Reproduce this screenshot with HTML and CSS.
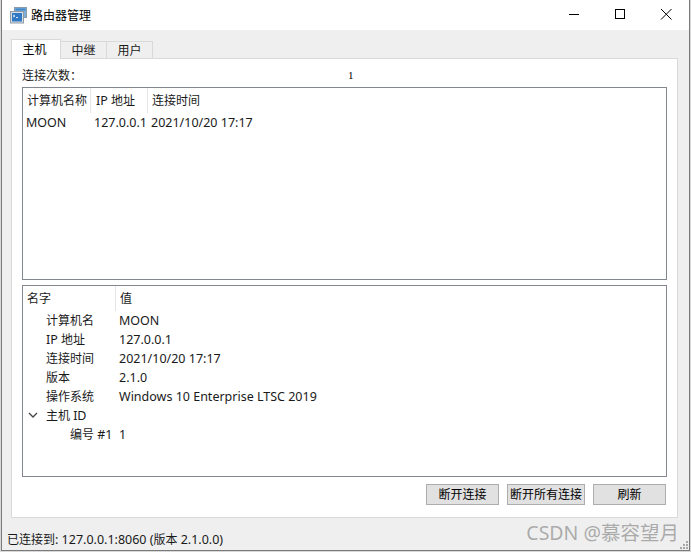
FILE: index.html
```html
<!DOCTYPE html>
<html lang="zh">
<head>
<meta charset="utf-8">
<title>路由器管理</title>
<link rel="stylesheet" href="styles.css">
</head>
<body>
<div class="window">
  <div class="titlebar">
    <svg class="app-icon" width="17" height="17" viewBox="0 0 17 17">
      <rect x="4.500" y="0.500" width="12" height="10" fill="#7fb0dc" stroke="#8b9aa8"/>
      <rect x="5.500" y="1.500" width="10" height="2" fill="#3f88cc"/>
      <rect x="0.500" y="4.500" width="13" height="11.500" fill="#d8dee4" stroke="#8f9aa6"/>
      <rect x="2" y="6" width="10" height="8.500" fill="#2f78c4"/>
      <path d="M3 8l2 1-2 1M6 10.500h2" fill="none" stroke="#fff" stroke-width="0.800"/>
    </svg>
    <span class="title-text">路由器管理</span>
    <div class="controls">
      <svg class="ctl" width="46" height="30" viewBox="0 0 46 30"><path d="M18 14.500h10" stroke="#000" fill="none"/></svg>
      <svg class="ctl" width="46" height="30" viewBox="0 0 46 30"><rect x="18.500" y="9.500" width="9" height="9" stroke="#000" fill="none"/></svg>
      <svg class="ctl" width="46" height="30" viewBox="0 0 46 30"><path d="M18 9l10.500 10.500M28.500 9L18 19.500" stroke="#000" fill="none"/></svg>
    </div>
  </div>
  <div class="body">
    <div class="tabs">
      <div class="tab active">主机</div>
      <div class="tab">中继</div>
      <div class="tab">用户</div>
    </div>
    <div class="pane">
      <div class="count-row"><span class="count-label">连接次数：</span><span class="count-value">1</span></div>
      <div class="list upper">
        <div class="row head">
          <div class="cell c1">计算机名称</div>
          <div class="cell c2"><span class="lat">IP</span> 地址</div>
          <div class="cell c3">连接时间</div>
        </div>
        <div class="row data">
          <div class="cell c1 lat">MOON</div>
          <div class="cell c2 lat">127.0.0.1</div>
          <div class="cell c3 lat">2021/10/20 17:17</div>
        </div>
      </div>
      <div class="list lower">
        <div class="row head">
          <div class="cell n1">名字</div>
          <div class="cell n2">值</div>
        </div>
        <div class="tree">
          <div class="trow"><div class="tname">计算机名</div><div class="lat">MOON</div></div>
          <div class="trow"><div class="tname"><span class="lat">IP</span> 地址</div><div class="lat">127.0.0.1</div></div>
          <div class="trow"><div class="tname">连接时间</div><div class="lat">2021/10/20 17:17</div></div>
          <div class="trow"><div class="tname">版本</div><div class="lat">2.1.0</div></div>
          <div class="trow"><div class="tname">操作系统</div><div class="lat">Windows 10 Enterprise LTSC 2019</div></div>
          <div class="trow"><div class="tname"><svg class="chev" width="10" height="6" viewBox="0 0 10 6"><path d="M1 1l4 4 4-4" fill="none" stroke="#444" stroke-width="1.300"/></svg>主机 <span class="lat">ID</span></div><div></div></div>
          <div class="trow"><div class="tname child">编号 <span class="lat">#1</span></div><div class="lat">1</div></div>
        </div>
      </div>
      <div class="buttons">
        <div class="btn b1">断开连接</div>
        <div class="btn b2">断开所有连接</div>
        <div class="btn b3">刷新</div>
      </div>
    </div>
    <div class="status">已连接到<span class="lat">: 127.0.0.1:8060 (</span>版本 <span class="lat">2.1.0.0)</span></div>
  </div>
  <div class="watermark">CSDN @慕容望月</div>
  <svg class="grip" width="10" height="8" viewBox="0 0 10 8">
    <path d="M7 0h2v2H7zM4 3h2v2H4zM7 3h2v2H7zM1 6h2v2H1zM4 6h2v2H4zM7 6h2v2H7z" fill="#a8a8a8"/>
  </svg>
</div>
</body>
</html>
```
FILE: styles.css
```css
* { box-sizing: border-box; }
html, body { margin: 0; padding: 0; }
body {
  width: 691px;
  height: 552px;
  overflow: hidden;
  background: #d8d8d8;
  font-family: "Noto Sans", "Noto Sans CJK SC", sans-serif;
  font-size: 12px;
  color: #1a1a1a;
}
.lat { font-size: 12.500px; }
.window {
  position: relative;
  width: 689px;
  height: 551px;
  margin-left: 1px;
  display: flex;
  flex-direction: column;
  background: #efefef;
  border: 1px solid #7a7a7a;
  border-top: 0;
}
.titlebar {
  height: 30px;
  flex: none;
  background: #fff;
  display: flex;
  align-items: center;
  padding-left: 8px;
}
.app-icon { flex: none; }
.title-text { margin-left: 4px; font-size: 12px; color: #000; }
.controls { margin-left: auto; display: flex; }
.ctl { display: block; }
.body {
  flex: 1;
  display: flex;
  flex-direction: column;
  padding: 9px 11px 0 9px;
}
.tabs { display: flex; height: 19px; flex: none; align-items: flex-end; position: relative; z-index: 1; }
.tab {
  width: 46px;
  height: 17px;
  background: #efefef;
  border: 1px solid #d9d9d9;
  border-left: 0;
  border-bottom: 0;
  text-align: center;
  line-height: 17px;
}
.tab.active {
  width: 50px;
  height: 20px;
  background: #fff;
  border-left: 1px solid #d9d9d9;
  margin-bottom: -1px;
  padding-right: 3px;
  line-height: 20px;
  color: #000;
}
.pane {
  height: 460px;
  flex: none;
  background: #fff;
  border: 1px solid #d9d9d9;
  padding: 8px 10px 0 10px;
  display: flex;
  flex-direction: column;
}
.count-row { display: flex; height: 20px; flex: none; line-height: 17px; }
.count-label { width: 326px; }
.count-value { font-family: "Liberation Serif", serif; font-size: 11px; color: #000; }
.list { background: #fff; border: 1px solid #828790; flex: none; }
.upper { height: 193px; }
.lower { height: 192px; margin-top: 5px; }
.row { display: flex; }
.head { height: 25px; line-height: 26px; }
.head .cell { border-right: 1px solid #e5e5e5; height: 25px; padding-left: 4px; }
.data { height: 19px; line-height: 18px; margin-top: 1px; }
.data .cell { padding-left: 3px; }
.c1 { width: 68px; }
.c2 { width: 57px; }
.head .c2 { padding-left: 5px; }
.head .c3, .data .c3 { flex: 1; border-right: 0; }
.n1 { width: 93px; }
.head .n2 { flex: 1; border-right: 0; }
.trow { display: flex; height: 19px; line-height: 19px; }
.tname { width: 96px; padding-left: 23px; position: relative; white-space: nowrap; }
.child { padding-left: 47px; }
.chev { position: absolute; left: 5px; top: 6px; }
.buttons { display: flex; justify-content: flex-end; gap: 8px; padding: 7px 1px 0 0; }
.btn {
  height: 21px;
  background: #e1e1e1;
  border: 1px solid #adadad;
  text-align: center;
  line-height: 19px;
  color: #000;
}
.b1 { width: 73px; }
.b2 { width: 78px; }
.b3 { width: 73px; }
.status { height: 32px; line-height: 44px; margin-left: -4px; white-space: nowrap; }
.watermark {
  position: absolute;
  right: 10px;
  top: 519px;
  font-size: 19.500px;
  line-height: 28px;
  color: rgba(140, 140, 140, 0.700);
  white-space: nowrap;
}
.grip { position: absolute; right: 0; bottom: 1px; }
```
